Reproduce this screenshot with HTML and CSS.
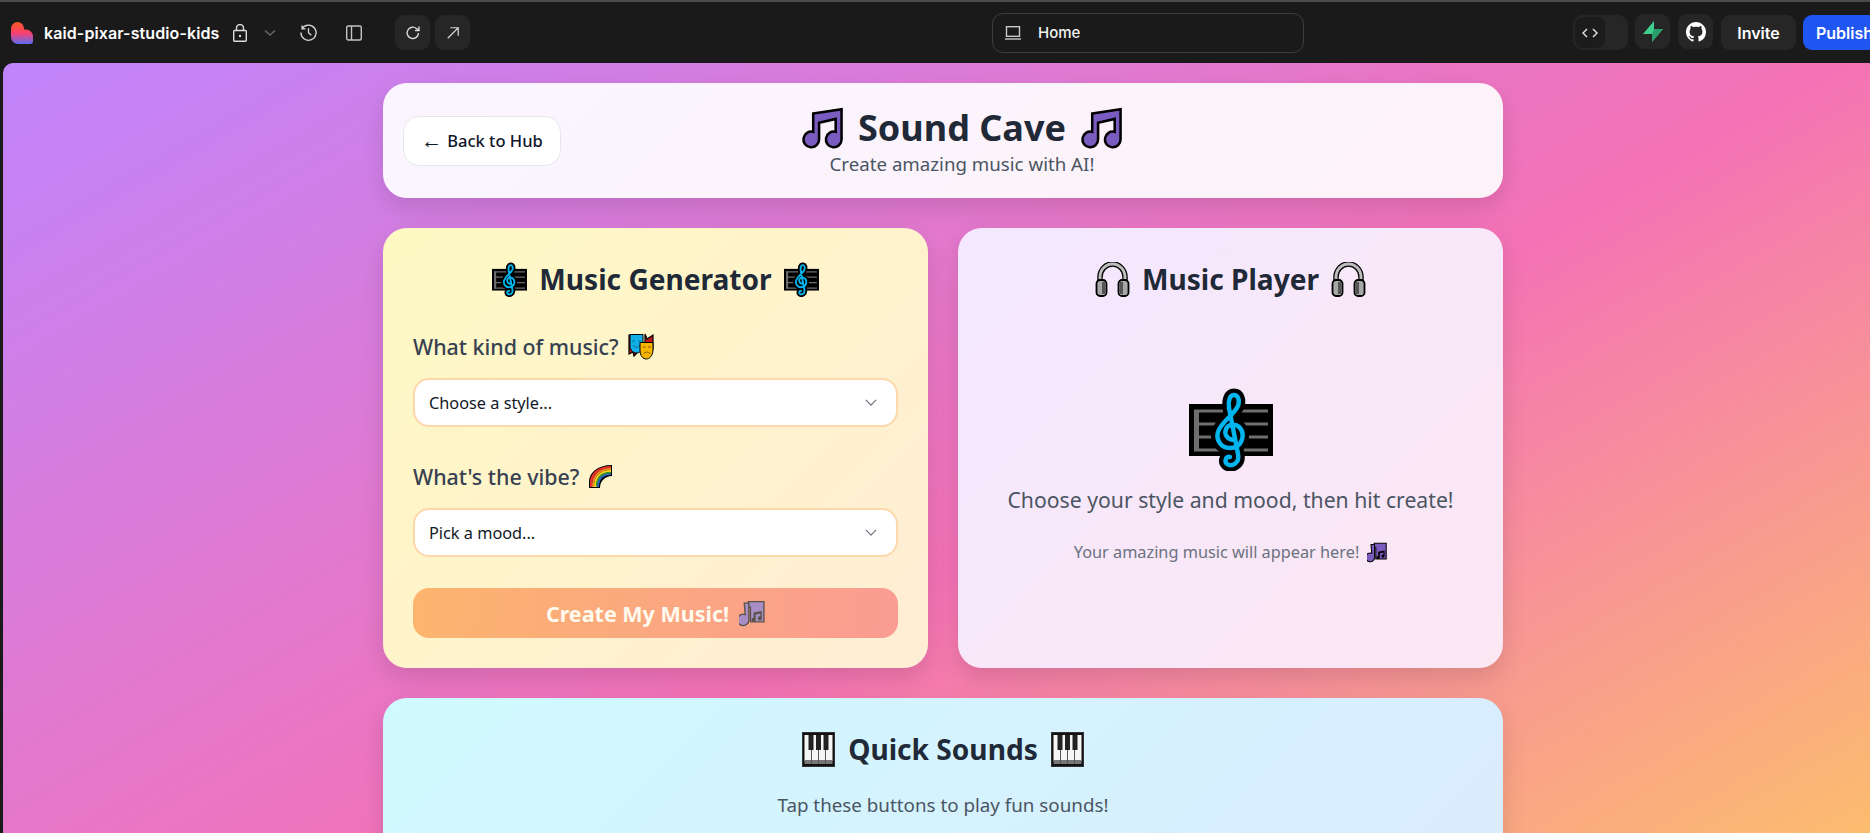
FILE: index.html
```html
<!DOCTYPE html>
<html lang="en">
<head>
<meta charset="utf-8">
<title>Sound Cave</title>
<link rel="stylesheet" href="styles.css">
</head>
<body>
<svg class="defs" aria-hidden="true">
  <defs>
    <linearGradient id="heart" x1="0" y1="0" x2="0" y2="1">
      <stop offset="0" stop-color="#ff5a1f"/><stop offset=".5" stop-color="#f9406f"/><stop offset="1" stop-color="#5b6cf5"/>
    </linearGradient>
    <symbol id="e-notes" viewBox="-1.5 0 44 42.5">
      <path d="M11 6.5 L40 2 V33 A8 8 0 1 1 34 25.2 V12 L17 16 V33 A8 8 0 1 1 11 25.2 Z" fill="#7a5bc0" stroke="#000" stroke-width="2.6" stroke-linejoin="miter"/>
    </symbol>
    <symbol id="e-score" viewBox="0 0 84 83">
      <rect x="0" y="16" width="84" height="52" fill="#000"/>
      <path d="M5 23H79M5 36H79M5 49H79M5 62H79" stroke="#6e6e6e" stroke-width="3" fill="none"/>
      <rect x="5" y="22" width="5" height="41" fill="#6e6e6e"/>
      <path class="clef-out" d="M46 52C38 52 35 46 37 41C39 36 47 35 51 40C56 46 54 60 41 60C31 60 27 51 29 44C32 34 44 28 49 18C51 12 49 7 45 7C41 7 39 12 40 20L49 66C51 76 42 79 38 76C35 73 37 68 41 69"/>
      <path class="clef-in" d="M46 52C38 52 35 46 37 41C39 36 47 35 51 40C56 46 54 60 41 60C31 60 27 51 29 44C32 34 44 28 49 18C51 12 49 7 45 7C41 7 39 12 40 20L49 66C51 76 42 79 38 76C35 73 37 68 41 69"/>
    </symbol>
    <symbol id="e-phones" viewBox="0 0 34 35">
      <path d="M4.500 20V15A12.500 13 0 0 1 29.500 15V20" fill="none" stroke="#000" stroke-width="5.500"/>
      <path d="M4.500 20V15A12.500 13 0 0 1 29.500 15V20" fill="none" stroke="#bdbdbd" stroke-width="3"/>
      <rect x="1" y="18" width="10" height="16" rx="3.500" fill="#a8a8a8" stroke="#000" stroke-width="1.800"/>
      <rect x="23" y="18" width="10" height="16" rx="3.500" fill="#a8a8a8" stroke="#000" stroke-width="1.800"/>
      <rect x="6.500" y="20" width="3" height="12" fill="#555"/>
      <rect x="24.500" y="20" width="3" height="12" fill="#555"/>
    </symbol>
    <symbol id="e-piano" viewBox="0 0 33 35">
      <rect x=".5" y=".5" width="32" height="34" fill="#111" stroke="#333"/>
      <path d="M2.500 3H30.500V29H2.500Z" fill="#f6f6f6"/>
      <path d="M2.500 28H30.500V32H2.500Z" fill="#777"/>
      <path d="M9.500 3V32M16.500 3V32M23.500 3V32" stroke="#555" stroke-width="1"/>
      <path d="M6.500 3H11.500V18H6.500ZM14 3H19V18H14ZM21.500 3H26.500V18H21.500Z" fill="#222"/>
    </symbol>
    <symbol id="e-masks" viewBox="0 0 26 27">
      <path d="M1 6V21L5 19L6 23L9 20V2H1Z" fill="#c01818" stroke="#000" stroke-width="1.200"/>
      <path d="M17 1L19 6L25 2V16H17Z" fill="#c01818" stroke="#000" stroke-width="1.200"/>
      <path d="M2 1.500H15V13C15 18 11 20 8.500 20C5 20 2 17 2 13Z" fill="#11aee8" stroke="#000" stroke-width="1"/>
      <path d="M4 8H7M10 8H13M5 12C7 15 10 15 12 12" stroke="#0a6d9c" stroke-width="1" fill="none"/>
      <path d="M12 9.500H25V17C25 23 21 26 18.500 26C15 26 12 23 12 17Z" fill="#f5b400" stroke="#000" stroke-width="1"/>
      <path d="M15 14H17.500M20 14H23M15.500 21C17 18.500 20.500 18.500 22.500 21" stroke="#8a5a00" stroke-width="1" fill="none"/>
    </symbol>
    <symbol id="e-rainbow" viewBox="0 0 25 25">
      <path d="M1 24V18C1 9 9 1 24 1V12C17 12 12 17 12 24Z" fill="#000"/>
      <path d="M2 23V18C2 9.500 10 2 23 2V4C11 4 4 11 4 23Z" fill="#e5322d"/>
      <path d="M4 23C4 11 11 4 23 4V6C12 6 6 12 6 23Z" fill="#f58a1f"/>
      <path d="M6 23C6 12 12 6 23 6V8C13 8 8 13 8 23Z" fill="#f5d21f"/>
      <path d="M8 23C8 13 13 8 23 8V9.500C14 9.500 9.500 14 9.500 23Z" fill="#3aa935"/>
      <path d="M9.500 23C9.500 14 14 9.500 23 9.500V11C15 11 11 15 11 23Z" fill="#3267d6"/>
    </symbol>
    <symbol id="e-many" viewBox="0 0 25 26">
      <path d="M9 1.500H24V21H11V7H9Z" fill="#7a5bc0" stroke="#000" stroke-width="1.300"/>
      <path d="M14 12L22 10.500V17.500A2 2 0 1 1 20.500 15.700V13L16 14V19A2 2 0 1 1 14 17.200Z" fill="#000"/>
      <path d="M5 3L9.500 3V19A5.500 5.500 0 1 1 6 14Z" fill="#7a5bc0" stroke="#000" stroke-width="1.300"/>
    </symbol>
  </defs>
</svg>

<div class="app">
  <header class="topbar">
    <div class="tb-left">
      <svg class="logo" viewBox="0 0 22 22"><path d="M6.500 0A6.500 6.500 0 0 1 13 6.500V7.600H15A7 7 0 0 1 22 14.500V19A3 3 0 0 1 19 22H7A7 7 0 0 1 0 15V6.500A6.500 6.500 0 0 1 6.500 0Z" fill="url(#heart)"/></svg>
      <span class="project">kaid-pixar-studio-kids</span>
      <svg class="ic lock" viewBox="0 0 14 18"><rect x=".7" y="6.500" width="12.600" height="10.800" rx="1"/><path d="M3.500 6.500V4A3.500 3.500 0 0 1 10.500 4V6.500"/><circle cx="7" cy="12" r="1.200" fill="currentColor" stroke="none"/></svg>
      <svg class="ic chev" viewBox="0 0 12 8"><path d="M1 1.500L6 6L11 1.500"/></svg>
      <svg class="ic hist" viewBox="0 0 18 18"><path d="M2.200 1.500V5.200H5.800M2.200 5A8 8 0 1 1 1 9"/><path d="M9 4.500V9.300L12 12"/></svg>
      <svg class="ic side" viewBox="0 0 16 16"><rect x=".7" y="1" width="14.600" height="14" rx="1.500"/><path d="M5.500 1V15"/></svg>
      <div class="squares">
        <span class="sq"><svg class="ic i16" viewBox="0 0 16 16"><path d="M13.500 8A5.700 5.700 0 1 1 11.500 3.500L14 5.500M14 1.500V5.500H10"/></svg></span>
        <span class="sq"><svg class="ic i14" viewBox="0 0 16 16"><path d="M2 14L14 2M5 2H14V11"/></svg></span>
      </div>
    </div>
    <div class="urlbox">
      <svg class="ic laptop" viewBox="0 0 16 14"><rect x="1.500" y=".7" width="13" height="9.600"/><path d="M0 13H16"/></svg>
      <span>Home</span>
    </div>
    <div class="tb-right">
      <span class="pill"><span class="pill-in"><svg class="ic codei" viewBox="0 0 16 10"><path d="M5 1L1 5L5 9M11 1L15 5L11 9"/></svg></span></span>
      <span class="sq top"><svg class="supa" viewBox="0 0 20 21"><path d="M11 0V8H20L9 21V13H0Z" fill="#3ecf8e"/><path d="M11 8H20L9 21V13Z" fill="#2a9d6c"/></svg></span>
      <span class="sq top"><svg class="gh" viewBox="0 0 16 16"><path fill="#fff" d="M8 0C3.580 0 0 3.580 0 8c0 3.540 2.290 6.530 5.470 7.590.4.070.55-.17.55-.38 0-.19-.01-.82-.01-1.490-2.010.37-2.530-.49-2.690-.94-.09-.23-.48-.94-.82-1.130-.28-.15-.68-.52-.01-.53.63-.01 1.080.58 1.230.82.72 1.210 1.870.87 2.330.66.07-.52.28-.87.51-1.070-1.780-.2-3.640-.89-3.640-3.950 0-.87.31-1.590.82-2.150-.08-.2-.36-1.020.08-2.120 0 0 .67-.21 2.200.82.64-.18 1.320-.27 2-.27.68 0 1.360.09 2 .27 1.530-1.040 2.200-.82 2.200-.82.44 1.100.16 1.920.08 2.120.51.56.82 1.270.82 2.150 0 3.070-1.870 3.750-3.650 3.950.29.25.54.73.54 1.480 0 1.070-.01 1.930-.01 2.200 0 .21.15.46.55.38A8.013 8.013 0 0016 8c0-4.420-3.580-8-8-8z"/></svg></span>
      <span class="btn-top invite">Invite</span>
      <span class="btn-top publish">Publish</span>
    </div>
  </header>

  <main class="stage">
    <div class="content">
      <section class="card hero">
        <a class="back"><span class="arrow">←</span> Back to Hub</a>
        <div class="hero-title">
          <h1 class="h1"><svg class="em e41"><use href="#e-notes"/></svg><span>Sound Cave</span><svg class="em e41"><use href="#e-notes"/></svg></h1>
          <p class="sub">Create amazing music with AI!</p>
        </div>
        <span class="hero-spacer"></span>
      </section>

      <div class="two">
        <section class="card gen">
          <h2 class="h2"><svg class="em e35"><use href="#e-score"/></svg><span>Music Generator</span><svg class="em e35"><use href="#e-score"/></svg></h2>
          <div class="label"><span>What kind of music?</span><svg class="em e26"><use href="#e-masks"/></svg></div>
          <div class="select"><span>Choose a style...</span><svg class="ic sel-chev" viewBox="0 0 14 8"><path d="M1 1L7 7L13 1"/></svg></div>
          <div class="label second"><span>What's the vibe?</span><svg class="em e25"><use href="#e-rainbow"/></svg></div>
          <div class="select"><span>Pick a mood...</span><svg class="ic sel-chev" viewBox="0 0 14 8"><path d="M1 1L7 7L13 1"/></svg></div>
          <div class="create"><span>Create My Music!</span><svg class="em e26"><use href="#e-many"/></svg></div>
        </section>

        <section class="card player">
          <h2 class="h2"><svg class="em e35"><use href="#e-phones"/></svg><span>Music Player</span><svg class="em e35"><use href="#e-phones"/></svg></h2>
          <div class="placeholder">
            <svg class="em big"><use href="#e-score"/></svg>
            <p class="ph-main">Choose your style and mood, then hit create!</p>
            <p class="ph-small"><span>Your amazing music will appear here!</span><svg class="em e20"><use href="#e-many"/></svg></p>
          </div>
        </section>
      </div>

      <section class="card quick">
        <h2 class="h2"><svg class="em e35"><use href="#e-piano"/></svg><span>Quick Sounds</span><svg class="em e35"><use href="#e-piano"/></svg></h2>
        <p class="tap">Tap these buttons to play fun sounds!</p>
      </section>
    </div>
  </main>
</div>
</body>
</html>
```

FILE: styles.css
```css
* { box-sizing: border-box; }
html, body { margin: 0; padding: 0; height: 100%; overflow: hidden; background: #1a1a1a; }
body { font-family: "Noto Sans", "Open Sans", sans-serif; color: #1f2937; }
.defs { width: 0; height: 0; display: block; overflow: hidden; }
.clef-out { fill: none; stroke: #000; stroke-width: 13; stroke-linecap: round; }
.clef-in { fill: none; stroke: #00b4ee; stroke-width: 4.5; stroke-linecap: round; }

.app { width: 1883px; height: 833px; display: flex; flex-direction: column; }

.topbar { flex: 0 0 63px; display: flex; align-items: center; background: #1a1a1a; border-top: 2px solid #4b4b4b; font-family: Inter, sans-serif; color: #fff; }
.tb-left { flex: 0 0 992px; display: flex; align-items: center; padding-left: 11px; height: 100%; }
.logo { width: 22px; height: 22px; flex: none; }
.project { margin-left: 11px; font-size: 16px; font-weight: 600; width: 177px; white-space: nowrap; letter-spacing: .1px; }
.ic { fill: none; stroke: currentColor; stroke-width: 1.4; flex: none; }
.lock { width: 14px; height: 18px; margin-left: 12px; color: #dcdcdc; }
.chev { width: 12px; height: 8px; margin-left: 17px; color: #6b6b6b; }
.hist { width: 17px; height: 17px; margin-left: 24px; color: #d8d8d8; }
.side { width: 16px; height: 16px; margin-left: 29px; color: #c4c4c4; }
.squares { display: flex; gap: 5px; margin-left: 33px; }
.sq { width: 35px; height: 35px; border-radius: 9px; background: #262626; display: flex; align-items: center; justify-content: center; color: #d8d8d8; }
.i14 { width: 14px; height: 14px; }
.i16 { width: 16px; height: 16px; }

.urlbox { flex: 0 0 312px; height: 40px; display: flex; align-items: center; border: 1px solid #3d3d3d; border-radius: 11px; padding-left: 12px; font-size: 15px; font-weight: 500; color: #f2f2f2; }
.laptop { width: 16px; height: 14px; margin-right: 17px; color: #c8c8c8; }

.tb-right { margin-left: 269px; display: flex; align-items: center; height: 35px; flex: none; }
.pill { width: 55px; height: 35px; border-radius: 10px; background: #262626; padding: 2px; display: block; margin-right: 7px; }
.pill-in { width: 30px; height: 31px; border-radius: 8px; background: #1c1c1c; display: flex; align-items: center; justify-content: center; color: #e8e8e8; }
.codei { width: 16px; height: 10px; }
.tb-right .sq { margin-right: 8px; }
.sq.top { margin-top: -2px; }
.supa { width: 20px; height: 21px; }
.gh { width: 20px; height: 20px; }
.btn-top { height: 35px; border-radius: 9px; display: flex; align-items: center; justify-content: center; font-size: 16px; font-weight: 600; flex: none; }
.invite { width: 75px; background: #262626; margin-right: 7px; }
.publish { width: 83px; background: #1f55f0; }

.stage { flex: 1; margin-left: 3px; border-radius: 10px 0 0 0; overflow: hidden; background: linear-gradient(150deg, #c084fc 0%, #f472b6 57%, #fcbd6e 100%); padding-top: 20px; }
.content { width: 1120px; margin: 0 auto; }

.card { border-radius: 24px; box-shadow: 0 10px 25px rgba(0,0,0,.12); }
.hero { height: 115px; padding: 0 20px; display: flex; align-items: center; justify-content: space-between; background: linear-gradient(135deg, #faf5ff, #fdf2f8); }
.back { width: 158px; height: 50px; flex: none; border: 1px solid #e5e7eb; border-radius: 16px; background: #fff; display: flex; align-items: center; justify-content: center; gap: 5px; font-size: 16.5px; font-weight: 500; color: #0f172a; white-space: nowrap; }
.arrow { font-size: 21px; line-height: 1; }
.hero-title { width: 323px; flex: none; display: flex; flex-direction: column; align-items: center; margin-top: 3px; }
.hero-spacer { width: 120px; flex: none; }
.h1 { margin: 0; height: 41px; display: flex; align-items: center; gap: 14px; font-size: 36px; font-weight: 700; color: #1f2937; white-space: nowrap; }
.sub { margin: 3px 0 0; font-size: 18.7px; line-height: 26px; color: #4b5563; white-space: nowrap; }
.em { flex: none; display: inline-block; vertical-align: middle; }
.e41 { width: 43px; height: 42px; }
.e35 { width: 35px; height: 35px; }
.e26 { width: 26px; height: 27px; }
.e25 { width: 25px; height: 25px; }
.e20 { width: 20px; height: 21px; }
.big { width: 84px; height: 83px; display: block; }

.two { display: grid; grid-template-columns: 545px 545px; gap: 30px; margin-top: 30px; }
.gen { height: 440px; padding: 30px; background: linear-gradient(135deg, #fef9c3, #ffedd5); }
.player { height: 440px; padding: 30px; background: linear-gradient(135deg, #f3e8ff, #fce7f3); }
.h2 { margin: 0; height: 42px; display: flex; align-items: center; justify-content: center; gap: 12px; font-size: 28.1px; font-weight: 700; color: #1f2937; white-space: nowrap; }
.label { margin-top: 31px; height: 30px; display: flex; align-items: center; gap: 9px; font-size: 21.4px; font-weight: 500; color: #374151; white-space: nowrap; }
.label.second { margin-top: 34px; }
.select { margin-top: 17px; height: 49px; display: flex; align-items: center; justify-content: space-between; background: #fff; border: 2px solid #fed7aa; border-radius: 16px; padding: 1px 19px 0 14px; font-size: 16.3px; color: #111827; }
.sel-chev { width: 12px; height: 7px; color: #6b7280; margin-top: -2px; }
.create { margin-top: 31px; height: 50px; display: flex; align-items: center; justify-content: center; gap: 10px; border-radius: 16px; background: linear-gradient(90deg, #fb923c, #f87171); opacity: .65; color: #fff; font-size: 21.5px; font-weight: 700; }

.placeholder { display: flex; flex-direction: column; align-items: center; padding-top: 88px; }
.ph-main { margin: 14px 0 0; line-height: 30px; font-size: 21.2px; color: #4b5563; white-space: nowrap; }
.ph-small { margin: 22px 0 0; height: 30px; display: flex; align-items: center; gap: 8px; font-size: 16.3px; color: #6b7280; white-space: nowrap; }

.quick { margin-top: 30px; height: 300px; padding: 30px; background: linear-gradient(135deg, #cffafe, #dbeafe); }
.tap { margin: 21px 0 0; text-align: center; font-size: 18.8px; line-height: 28px; color: #4b5563; }
```
